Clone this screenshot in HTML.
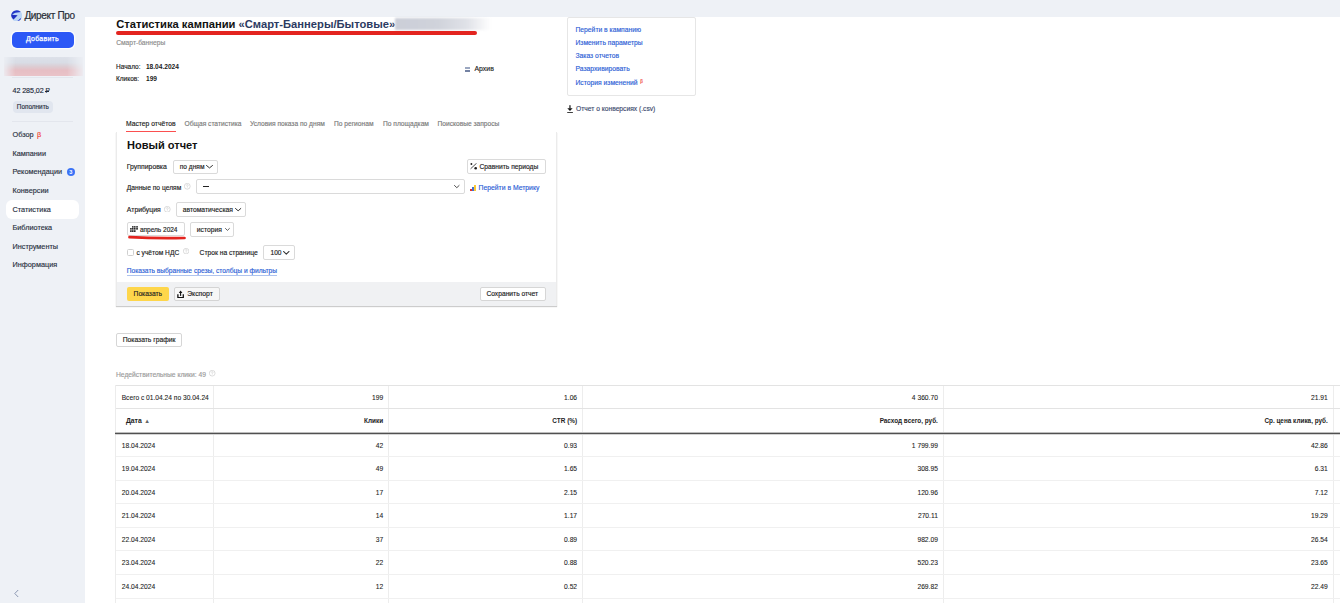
<!DOCTYPE html>
<html><head><meta charset="utf-8"><style>
html,body{margin:0;padding:0;}
body{width:1340px;height:603px;overflow:hidden;position:relative;background:#eef1f6;font-family:"Liberation Sans",sans-serif;color:#222;}
.a{position:absolute;}
.t{position:absolute;white-space:nowrap;line-height:1;-webkit-text-stroke-width:0.15px;}
.b{-webkit-text-stroke-width:0;}
.b{font-weight:bold;}
.box{position:absolute;border:1px solid #dadada;border-radius:2px;background:#fff;box-sizing:border-box;}
</style></head><body>
<div class="a" style="left:85px;top:17px;width:1255px;height:586px;background:#fff"></div>
<svg class="a" style="left:10.6px;top:9.9px" width="11.4" height="11.6" viewBox="0 0 12 12">
  <circle cx="6" cy="6" r="5.9" fill="#bcd6f6"/>
  <path d="M0.2 6.3 A5.9 5.9 0 0 1 10.4 2.1 C8.2 2.5 5.2 2.3 2.9 3.5 C1.6 4.3 0.8 5.2 0.2 6.3Z" fill="#2136c8"/>
  <path d="M0.5 4.8 L7 5.3 L2.7 9.8 C1.5 8.8 0.5 7.4 0.3 6.1Z" fill="#1f2fc0"/>
  <path d="M5.4 11.9 C7.4 11.4 8.8 10.1 9.8 8.2 L10.5 9.4 C9.5 10.8 7.6 11.8 5.4 11.9Z" fill="#2a3acb"/>
</svg>
<div class="t" style="left:24.40px;top:11px;font-size:10px;color:#2b2f38;letter-spacing:-0.33px;-webkit-text-stroke-width:0.22px">Директ Про</div>
<div class="a" style="left:11.8px;top:31.6px;width:62.2px;height:16.7px;background:#2c58f6;border-radius:5px;box-shadow:0 0 0 1.3px #fbfcfd"></div>
<div class="t" style="left:26.00px;top:35px;font-size:7px;color:#fff;letter-spacing:0.25px;-webkit-text-stroke-width:0.25px">Добавить</div>
<div class="a" style="left:4px;top:57px;width:79px;height:18.5px;background:linear-gradient(#dde1e9 0,#d8dce5 30%,#dccdd3 50%,#e6bec4 70%,#e9c3c8 100%);-webkit-mask-image:linear-gradient(90deg,rgba(0,0,0,.15) 0,#000 14%,#000 80%,rgba(0,0,0,.1) 100%);filter:blur(0.6px)"></div>
<div class="a" style="left:12px;top:77px;width:61px;height:1px;background:#e3e6ed"></div>
<div class="t" style="left:12.50px;top:88px;font-size:7.1px;color:#222a3a;letter-spacing:-0.05px">42 285,02 <span style="position:relative;font-size:6.6px">Р<span style="position:absolute;left:-0.5px;top:3.7px;width:3.6px;height:0.75px;background:#222a3a"></span></span></div>
<div class="a" style="left:12.5px;top:101px;width:40.3px;height:11.7px;background:#e1e6ef;border-radius:4px"></div>
<div class="t" style="left:16.80px;top:104px;font-size:6.4px;color:#2a3142;">Пополнить</div>
<div class="a" style="left:12px;top:121px;width:61px;height:1px;background:#e3e6ed"></div>
<div class="a" style="left:6.2px;top:199.9px;width:72.5px;height:18.9px;background:#fff;border-radius:6px"></div>
<div class="t" style="left:12.50px;top:131px;font-size:7.3px;color:#2a3142;">Обзор <span style="color:#ef3d33;margin-left:1.5px">β</span></div>
<div class="t" style="left:12.50px;top:150px;font-size:7.3px;color:#2a3142;">Кампании</div>
<div class="t" style="left:12.50px;top:168px;font-size:7.3px;color:#2a3142;">Рекомендации</div>
<div class="t" style="left:12.50px;top:187px;font-size:7.3px;color:#2a3142;">Конверсии</div>
<div class="t" style="left:12.50px;top:206px;font-size:7.3px;color:#2a3142;">Статистика</div>
<div class="t" style="left:12.50px;top:224px;font-size:7.3px;color:#2a3142;">Библиотека</div>
<div class="t" style="left:12.50px;top:243px;font-size:7.3px;color:#2a3142;">Инструменты</div>
<div class="t" style="left:12.50px;top:261px;font-size:7.3px;color:#2a3142;">Информация</div>
<div class="a" style="left:66.8px;top:168px;width:8.2px;height:8.2px;background:#3b73f6;border-radius:50%"></div>
<div class="t b" style="left:69.20px;top:170px;font-size:5.6px;color:#fff;">3</div>
<svg class="a" style="left:13px;top:589px" width="7" height="9" viewBox="0 0 7 9"><path d="M5.2 1 L1.8 4.5 L5.2 8" fill="none" stroke="#8b97b1" stroke-width="1"/></svg>
<div class="t b" style="left:116.20px;top:19px;font-size:11.2px;color:#111;"><span>Статистика кампании </span><span style="color:#2c3b62">«Смарт-Баннеры/Бытовые»</span></div>
<div class="a" style="left:395px;top:17.5px;width:96px;height:12px;background:linear-gradient(90deg,#cbced8 0,#d0d3db 45%,#e0e2e8 75%,rgba(255,255,255,0) 100%);filter:blur(1.2px)"></div>
<div class="a" style="left:116px;top:31.3px;width:360.5px;height:3.6px;background:#e3241f;border-radius:2px"></div>
<div class="t" style="left:116.20px;top:40px;font-size:6.7px;color:#8c8c8c;">Смарт-баннеры</div>
<div class="t" style="left:116.00px;top:64px;font-size:6.5px;color:#222;">Начало:</div>
<div class="t b" style="left:145.90px;top:64px;font-size:6.6px;color:#222;">18.04.2024</div>
<div class="t" style="left:116.00px;top:76px;font-size:6.5px;color:#222;">Кликов:</div>
<div class="t b" style="left:146.00px;top:76px;font-size:6.6px;color:#222;">199</div>
<div class="a" style="left:464.8px;top:67px;width:5.4px;height:1.8px;background:#9ba7c0"></div>
<div class="a" style="left:464.8px;top:70.1px;width:5.4px;height:1.9px;background:#7482a3"></div>
<div class="t" style="left:474.50px;top:66px;font-size:6.9px;color:#222;">Архив</div>
<div class="a" style="left:567px;top:17px;width:128.5px;height:78.5px;border:1px solid #e6e6e6;border-radius:2px;box-sizing:border-box;background:#fff"></div>
<div class="t" style="left:575.50px;top:27px;font-size:6.75px;color:#2c60d6;">Перейти в кампанию</div>
<div class="t" style="left:575.50px;top:40px;font-size:6.75px;color:#2c60d6;">Изменить параметры</div>
<div class="t" style="left:575.50px;top:53px;font-size:6.75px;color:#2c60d6;">Заказ отчетов</div>
<div class="t" style="left:575.50px;top:66px;font-size:6.75px;color:#2c60d6;">Разархивировать</div>
<div class="t" style="left:575.50px;top:80px;font-size:6.75px;color:#2c60d6;">История изменений<span style="color:#f0443a;font-size:4.5px;position:relative;top:-2.4px;margin-left:2.6px">β</span></div>
<svg class="a" style="left:566.8px;top:104.6px" width="6" height="8.6" viewBox="0 0 6 8.6"><rect x="2.2" y="0.2" width="1.5" height="3.3" fill="#444"/><path d="M0.3 3.2 L5.6 3.2 L2.95 5.9Z" fill="#111"/><rect x="0.2" y="7.2" width="5.7" height="1.25" fill="#111"/></svg>
<div class="t" style="left:576.00px;top:106px;font-size:6.7px;color:#3b4a6e;">Отчет о конверсиях (.csv)</div>
<div class="t" style="left:126.00px;top:121px;font-size:6.75px;color:#222;">Мастер отчётов</div>
<div class="t" style="left:184.50px;top:121px;font-size:6.65px;color:#7a7a7a;">Общая статистика</div>
<div class="t" style="left:250.00px;top:121px;font-size:6.65px;color:#7a7a7a;">Условия показа по дням</div>
<div class="t" style="left:334.00px;top:121px;font-size:6.65px;color:#7a7a7a;">По регионам</div>
<div class="t" style="left:383.00px;top:121px;font-size:6.65px;color:#7a7a7a;">По площадкам</div>
<div class="t" style="left:437.50px;top:121px;font-size:6.65px;color:#7a7a7a;">Поисковые запросы</div>
<div class="a" style="left:126px;top:130.9px;width:49.8px;height:1.3px;background:#fb4f4f"></div>
<div class="a" style="left:115.7px;top:132px;width:441.3px;height:174.3px;background:#fff;border-left:1px solid #ebebeb;border-right:1px solid #ebebeb;box-sizing:border-box;box-shadow:0 1px 1px rgba(0,0,0,.2)"></div>
<div class="a" style="left:116.7px;top:281.6px;width:439.3px;height:24.7px;background:#f0f1f3"></div>
<div class="t b" style="left:127.00px;top:140px;font-size:11.05px;color:#111;">Новый отчет</div>
<div class="t" style="left:126.70px;top:164px;font-size:6.9px;color:#222;">Группировка</div>
<div class="box" style="left:173px;top:160px;width:44.5px;height:14px"></div>
<div class="t" style="left:179.80px;top:164px;font-size:6.6px;color:#222;">по дням</div>
<svg class="a" style="left:205.20px;top:163.70px" width="9.00" height="5.40" viewBox="0 0 9.00 5.40"><path d="M1.50 1.50 L4.50 3.90 L7.50 1.50" fill="none" stroke="#333" stroke-width="1.0" stroke-linecap="round" stroke-linejoin="round"/></svg>
<div class="box" style="left:467px;top:159px;width:79px;height:15px"></div>
<svg class="a" style="left:470.4px;top:162.8px" width="7.4" height="7" viewBox="0 0 7.4 7"><path d="M0.6 5.8 L6.6 0.2" stroke="#333" stroke-width="0.85"/><circle cx="1.4" cy="1.0" r="0.95" fill="#222"/><circle cx="5.7" cy="5.2" r="1.3" fill="#1a1a1a"/></svg>
<div class="t" style="left:479.50px;top:164px;font-size:6.7px;color:#222;">Сравнить периоды</div>
<div class="t" style="left:126.70px;top:185px;font-size:6.7px;color:#222;">Данные по целям</div>
<svg class="a" style="left:184.2px;top:183px" width="6.5" height="6.5" viewBox="0 0 10 10"><circle cx="5" cy="5" r="4.5" fill="none" stroke="#c4c4c4" stroke-width="0.9"/><path d="M3.6 3.9 Q3.7 2.6 5 2.6 Q6.4 2.6 6.4 3.8 Q6.4 4.6 5.5 5 Q5 5.3 5 6.1" fill="none" stroke="#c4c4c4" stroke-width="0.9"/><circle cx="5" cy="7.4" r="0.55" fill="#c4c4c4"/></svg>
<div class="box" style="left:196px;top:179px;width:269px;height:14.5px"></div>
<div class="a" style="left:202.8px;top:185.9px;width:5.8px;height:0.9px;background:#222"></div>
<svg class="a" style="left:452.60px;top:183.70px" width="7.60" height="5.20" viewBox="0 0 7.60 5.20"><path d="M1.50 1.50 L3.80 3.70 L6.10 1.50" fill="none" stroke="#444" stroke-width="0.95" stroke-linecap="round" stroke-linejoin="round"/></svg>
<div class="a" style="left:469.9px;top:189.3px;width:1.9px;height:1.9px;background:#e8322c"></div>
<div class="a" style="left:471.9px;top:187px;width:1.9px;height:4.2px;background:#3f6fd8"></div>
<div class="a" style="left:473.9px;top:185px;width:2px;height:6.2px;background:#fcc934"></div>
<div class="t" style="left:478.60px;top:185px;font-size:6.8px;color:#2c60d6;">Перейти в Метрику</div>
<div class="t" style="left:126.80px;top:207px;font-size:6.9px;color:#222;">Атрибуция</div>
<svg class="a" style="left:164.3px;top:205.8px" width="6.5" height="6.5" viewBox="0 0 10 10"><circle cx="5" cy="5" r="4.5" fill="none" stroke="#c4c4c4" stroke-width="0.9"/><path d="M3.6 3.9 Q3.7 2.6 5 2.6 Q6.4 2.6 6.4 3.8 Q6.4 4.6 5.5 5 Q5 5.3 5 6.1" fill="none" stroke="#c4c4c4" stroke-width="0.9"/><circle cx="5" cy="7.4" r="0.55" fill="#c4c4c4"/></svg>
<div class="box" style="left:176px;top:202px;width:70px;height:15px"></div>
<div class="t" style="left:182.70px;top:207px;font-size:6.75px;color:#222;">автоматическая</div>
<svg class="a" style="left:234.10px;top:206.80px" width="8.30" height="5.30" viewBox="0 0 8.30 5.30"><path d="M1.50 1.50 L4.15 3.80 L6.80 1.50" fill="none" stroke="#333" stroke-width="1.0" stroke-linecap="round" stroke-linejoin="round"/></svg>
<div class="box" style="left:127px;top:222px;width:58px;height:14px"></div>
<svg class="a" style="left:129.6px;top:225.8px" width="8.2" height="6.2" viewBox="0 0 8.2 6.2"><g fill="#151515">
<rect x="2" y="0.2" width="1.6" height="1.4"/><rect x="4" y="0.2" width="1.6" height="1.4"/><rect x="6.2" y="0.2" width="1.7" height="1.4"/>
<rect x="0.1" y="2.1" width="1.6" height="1.5"/><rect x="2" y="2.1" width="1.6" height="1.5"/><rect x="4" y="2.1" width="1.6" height="1.5"/><rect x="6.2" y="2.1" width="1.7" height="1.5"/>
<rect x="0.1" y="4.3" width="1.6" height="1.6"/><rect x="2" y="4.3" width="1.6" height="1.6"/><rect x="4" y="4.3" width="1.6" height="1.6"/></g></svg>
<div class="t" style="left:139.90px;top:227px;font-size:6.5px;color:#222;">апрель 2024</div>
<svg class="a" style="left:128px;top:235.3px" width="58" height="5" viewBox="0 0 58 5"><path d="M1.5 2.2 Q28 3.6 56.5 3" fill="none" stroke="#e3241f" stroke-width="2.7" stroke-linecap="round"/></svg>
<div class="box" style="left:190px;top:222px;width:44px;height:15px"></div>
<div class="t" style="left:196.80px;top:227px;font-size:6.75px;color:#222;">история</div>
<svg class="a" style="left:224.10px;top:227.10px" width="6.90" height="4.90" viewBox="0 0 6.90 4.90"><path d="M1.50 1.50 L3.45 3.40 L5.40 1.50" fill="none" stroke="#444" stroke-width="0.85" stroke-linecap="round" stroke-linejoin="round"/></svg>
<div class="a" style="left:126.6px;top:248.6px;width:7.1px;height:7px;border:0.8px solid #cfcfcf;border-radius:1.5px;box-sizing:border-box;background:#fff"></div>
<div class="t" style="left:136.40px;top:250px;font-size:6.65px;color:#222;">с учётом НДС</div>
<svg class="a" style="left:183px;top:248.3px" width="6.2" height="6.2" viewBox="0 0 10 10"><circle cx="5" cy="5" r="4.5" fill="none" stroke="#c4c4c4" stroke-width="0.9"/><path d="M3.6 3.9 Q3.7 2.6 5 2.6 Q6.4 2.6 6.4 3.8 Q6.4 4.6 5.5 5 Q5 5.3 5 6.1" fill="none" stroke="#c4c4c4" stroke-width="0.9"/><circle cx="5" cy="7.4" r="0.55" fill="#c4c4c4"/></svg>
<div class="t" style="left:199.60px;top:250px;font-size:6.7px;color:#222;">Строк на странице</div>
<div class="box" style="left:263px;top:245px;width:32px;height:15px"></div>
<div class="t" style="left:270.50px;top:250px;font-size:6.6px;color:#222;">100</div>
<svg class="a" style="left:282.10px;top:249.50px" width="8.60" height="5.70" viewBox="0 0 8.60 5.70"><path d="M1.50 1.50 L4.30 4.20 L7.10 1.50" fill="none" stroke="#333" stroke-width="1.05" stroke-linecap="round" stroke-linejoin="round"/></svg>
<div class="t" style="left:126.70px;top:268px;font-size:6.65px;color:#2c60d6;">Показать выбранные срезы, столбцы и фильтры</div>
<div class="a" style="left:126.7px;top:274.6px;width:150.5px;height:1px;background:#aec3ee"></div>
<div class="a" style="left:127px;top:287px;width:42px;height:14px;background:#fed64b;border-radius:2px"></div>
<div class="t" style="left:133.60px;top:291px;font-size:6.7px;color:#222;">Показать</div>
<div class="box" style="left:174px;top:287px;width:45.5px;height:14px;background:#f7f7f7;border-color:#d4d4d4"></div>
<svg class="a" style="left:177px;top:289.5px" width="7.2" height="8.5" viewBox="0 0 7.2 8.5"><path d="M1.8 3.1 L3.6 0.4 L5.4 3.1Z" fill="#111"/><rect x="3.05" y="2.5" width="1.1" height="3.4" fill="#111"/><path d="M0.9 4.2 V7.6 H6.3 V4.2" fill="none" stroke="#111" stroke-width="1.3"/></svg>
<div class="t" style="left:187.20px;top:291px;font-size:6.85px;color:#222;">Экспорт</div>
<div class="box" style="left:480px;top:287px;width:66px;height:14px;border-color:#d6d6d6"></div>
<div class="t" style="left:486.40px;top:291px;font-size:6.7px;color:#222;">Сохранить отчет</div>
<div class="box" style="left:116px;top:333px;width:66px;height:13.5px;border-color:#d6d6d6"></div>
<div class="t" style="left:122.70px;top:337px;font-size:6.75px;color:#222;">Показать график</div>
<div class="t" style="left:116.00px;top:372px;font-size:6.7px;color:#9a9a9a;">Недействительные клики: 49</div>
<svg class="a" style="left:209.4px;top:370.2px" width="6.4" height="6.4" viewBox="0 0 10 10"><circle cx="5" cy="5" r="4.5" fill="none" stroke="#c4c4c4" stroke-width="0.9"/><path d="M3.6 3.9 Q3.7 2.6 5 2.6 Q6.4 2.6 6.4 3.8 Q6.4 4.6 5.5 5 Q5 5.3 5 6.1" fill="none" stroke="#c4c4c4" stroke-width="0.9"/><circle cx="5" cy="7.4" r="0.55" fill="#c4c4c4"/></svg>
<div class="a" style="left:115px;top:385px;width:1px;height:218px;background:#ececec"></div>
<div class="a" style="left:213px;top:385px;width:1px;height:218px;background:#ededed"></div>
<div class="a" style="left:388px;top:385px;width:1px;height:218px;background:#ededed"></div>
<div class="a" style="left:582px;top:385px;width:1px;height:218px;background:#ededed"></div>
<div class="a" style="left:943px;top:385px;width:1px;height:218px;background:#ededed"></div>
<div class="a" style="left:1333px;top:385px;width:1px;height:218px;background:#ededed"></div>
<div class="a" style="left:116px;top:385px;width:1224px;height:1px;background:#e3e3e3"></div>
<div class="a" style="left:116px;top:408px;width:1224px;height:1px;background:#e3e3e3"></div>
<div class="a" style="left:115px;top:432px;width:1225px;height:1px;background:#bdbdbd"></div>
<div class="a" style="left:115px;top:433px;width:1225px;height:1px;background:#505050"></div>
<div class="a" style="left:115px;top:434px;width:1225px;height:1px;background:#d4d4d4"></div>
<div class="a" style="left:116px;top:456px;width:1224px;height:1px;background:#f0f0f0"></div>
<div class="a" style="left:116px;top:480px;width:1224px;height:1px;background:#f0f0f0"></div>
<div class="a" style="left:116px;top:503px;width:1224px;height:1px;background:#f0f0f0"></div>
<div class="a" style="left:116px;top:527px;width:1224px;height:1px;background:#f0f0f0"></div>
<div class="a" style="left:116px;top:550px;width:1224px;height:1px;background:#f0f0f0"></div>
<div class="a" style="left:116px;top:574px;width:1224px;height:1px;background:#f0f0f0"></div>
<div class="a" style="left:116px;top:598px;width:1224px;height:1px;background:#f0f0f0"></div>
<div class="t" style="left:121.70px;top:395px;font-size:6.65px;color:#222;-webkit-text-stroke-width:0.08px">Всего с 01.04.24 по 30.04.24</div>
<div class="t" style="left:-16.90px;width:400px;text-align:right;top:395px;font-size:6.7px;color:#222;-webkit-text-stroke-width:0.08px">199</div>
<div class="t" style="left:177.10px;width:400px;text-align:right;top:395px;font-size:6.7px;color:#222;-webkit-text-stroke-width:0.08px">1.06</div>
<div class="t" style="left:537.90px;width:400px;text-align:right;top:395px;font-size:6.7px;color:#222;-webkit-text-stroke-width:0.08px">4 360.70</div>
<div class="t" style="left:927.80px;width:400px;text-align:right;top:395px;font-size:6.7px;color:#222;-webkit-text-stroke-width:0.08px">21.91</div>
<div class="t b" style="left:125.90px;top:418px;font-size:6.85px;color:#222;">Дата<span style="font-size:5.8px;color:#666;position:relative;top:-0.2px;margin-left:2.6px">▲</span></div>
<div class="t b" style="left:-16.90px;width:400px;text-align:right;top:418px;font-size:6.4px;color:#222;">Клики</div>
<div class="t b" style="left:177.10px;width:400px;text-align:right;top:418px;font-size:6.4px;color:#222;">CTR (%)</div>
<div class="t b" style="left:537.90px;width:400px;text-align:right;top:418px;font-size:6.4px;color:#222;">Расход всего, руб.</div>
<div class="t b" style="left:927.80px;width:400px;text-align:right;top:418px;font-size:6.4px;color:#222;">Ср. цена клика, руб.</div>
<div class="t" style="left:121.70px;top:443px;font-size:6.7px;color:#222;-webkit-text-stroke-width:0.08px">18.04.2024</div>
<div class="t" style="left:-16.90px;width:400px;text-align:right;top:443px;font-size:6.7px;color:#222;-webkit-text-stroke-width:0.08px">42</div>
<div class="t" style="left:177.10px;width:400px;text-align:right;top:443px;font-size:6.7px;color:#222;-webkit-text-stroke-width:0.08px">0.93</div>
<div class="t" style="left:537.90px;width:400px;text-align:right;top:443px;font-size:6.7px;color:#222;-webkit-text-stroke-width:0.08px">1 799.99</div>
<div class="t" style="left:927.80px;width:400px;text-align:right;top:443px;font-size:6.7px;color:#222;-webkit-text-stroke-width:0.08px">42.86</div>
<div class="t" style="left:121.70px;top:466px;font-size:6.7px;color:#222;-webkit-text-stroke-width:0.08px">19.04.2024</div>
<div class="t" style="left:-16.90px;width:400px;text-align:right;top:466px;font-size:6.7px;color:#222;-webkit-text-stroke-width:0.08px">49</div>
<div class="t" style="left:177.10px;width:400px;text-align:right;top:466px;font-size:6.7px;color:#222;-webkit-text-stroke-width:0.08px">1.65</div>
<div class="t" style="left:537.90px;width:400px;text-align:right;top:466px;font-size:6.7px;color:#222;-webkit-text-stroke-width:0.08px">308.95</div>
<div class="t" style="left:927.80px;width:400px;text-align:right;top:466px;font-size:6.7px;color:#222;-webkit-text-stroke-width:0.08px">6.31</div>
<div class="t" style="left:121.70px;top:490px;font-size:6.7px;color:#222;-webkit-text-stroke-width:0.08px">20.04.2024</div>
<div class="t" style="left:-16.90px;width:400px;text-align:right;top:490px;font-size:6.7px;color:#222;-webkit-text-stroke-width:0.08px">17</div>
<div class="t" style="left:177.10px;width:400px;text-align:right;top:490px;font-size:6.7px;color:#222;-webkit-text-stroke-width:0.08px">2.15</div>
<div class="t" style="left:537.90px;width:400px;text-align:right;top:490px;font-size:6.7px;color:#222;-webkit-text-stroke-width:0.08px">120.96</div>
<div class="t" style="left:927.80px;width:400px;text-align:right;top:490px;font-size:6.7px;color:#222;-webkit-text-stroke-width:0.08px">7.12</div>
<div class="t" style="left:121.70px;top:513px;font-size:6.7px;color:#222;-webkit-text-stroke-width:0.08px">21.04.2024</div>
<div class="t" style="left:-16.90px;width:400px;text-align:right;top:513px;font-size:6.7px;color:#222;-webkit-text-stroke-width:0.08px">14</div>
<div class="t" style="left:177.10px;width:400px;text-align:right;top:513px;font-size:6.7px;color:#222;-webkit-text-stroke-width:0.08px">1.17</div>
<div class="t" style="left:537.90px;width:400px;text-align:right;top:513px;font-size:6.7px;color:#222;-webkit-text-stroke-width:0.08px">270.11</div>
<div class="t" style="left:927.80px;width:400px;text-align:right;top:513px;font-size:6.7px;color:#222;-webkit-text-stroke-width:0.08px">19.29</div>
<div class="t" style="left:121.70px;top:537px;font-size:6.7px;color:#222;-webkit-text-stroke-width:0.08px">22.04.2024</div>
<div class="t" style="left:-16.90px;width:400px;text-align:right;top:537px;font-size:6.7px;color:#222;-webkit-text-stroke-width:0.08px">37</div>
<div class="t" style="left:177.10px;width:400px;text-align:right;top:537px;font-size:6.7px;color:#222;-webkit-text-stroke-width:0.08px">0.89</div>
<div class="t" style="left:537.90px;width:400px;text-align:right;top:537px;font-size:6.7px;color:#222;-webkit-text-stroke-width:0.08px">982.09</div>
<div class="t" style="left:927.80px;width:400px;text-align:right;top:537px;font-size:6.7px;color:#222;-webkit-text-stroke-width:0.08px">26.54</div>
<div class="t" style="left:121.70px;top:560px;font-size:6.7px;color:#222;-webkit-text-stroke-width:0.08px">23.04.2024</div>
<div class="t" style="left:-16.90px;width:400px;text-align:right;top:560px;font-size:6.7px;color:#222;-webkit-text-stroke-width:0.08px">22</div>
<div class="t" style="left:177.10px;width:400px;text-align:right;top:560px;font-size:6.7px;color:#222;-webkit-text-stroke-width:0.08px">0.88</div>
<div class="t" style="left:537.90px;width:400px;text-align:right;top:560px;font-size:6.7px;color:#222;-webkit-text-stroke-width:0.08px">520.23</div>
<div class="t" style="left:927.80px;width:400px;text-align:right;top:560px;font-size:6.7px;color:#222;-webkit-text-stroke-width:0.08px">23.65</div>
<div class="t" style="left:121.70px;top:584px;font-size:6.7px;color:#222;-webkit-text-stroke-width:0.08px">24.04.2024</div>
<div class="t" style="left:-16.90px;width:400px;text-align:right;top:584px;font-size:6.7px;color:#222;-webkit-text-stroke-width:0.08px">12</div>
<div class="t" style="left:177.10px;width:400px;text-align:right;top:584px;font-size:6.7px;color:#222;-webkit-text-stroke-width:0.08px">0.52</div>
<div class="t" style="left:537.90px;width:400px;text-align:right;top:584px;font-size:6.7px;color:#222;-webkit-text-stroke-width:0.08px">269.82</div>
<div class="t" style="left:927.80px;width:400px;text-align:right;top:584px;font-size:6.7px;color:#222;-webkit-text-stroke-width:0.08px">22.49</div>
</body></html>
